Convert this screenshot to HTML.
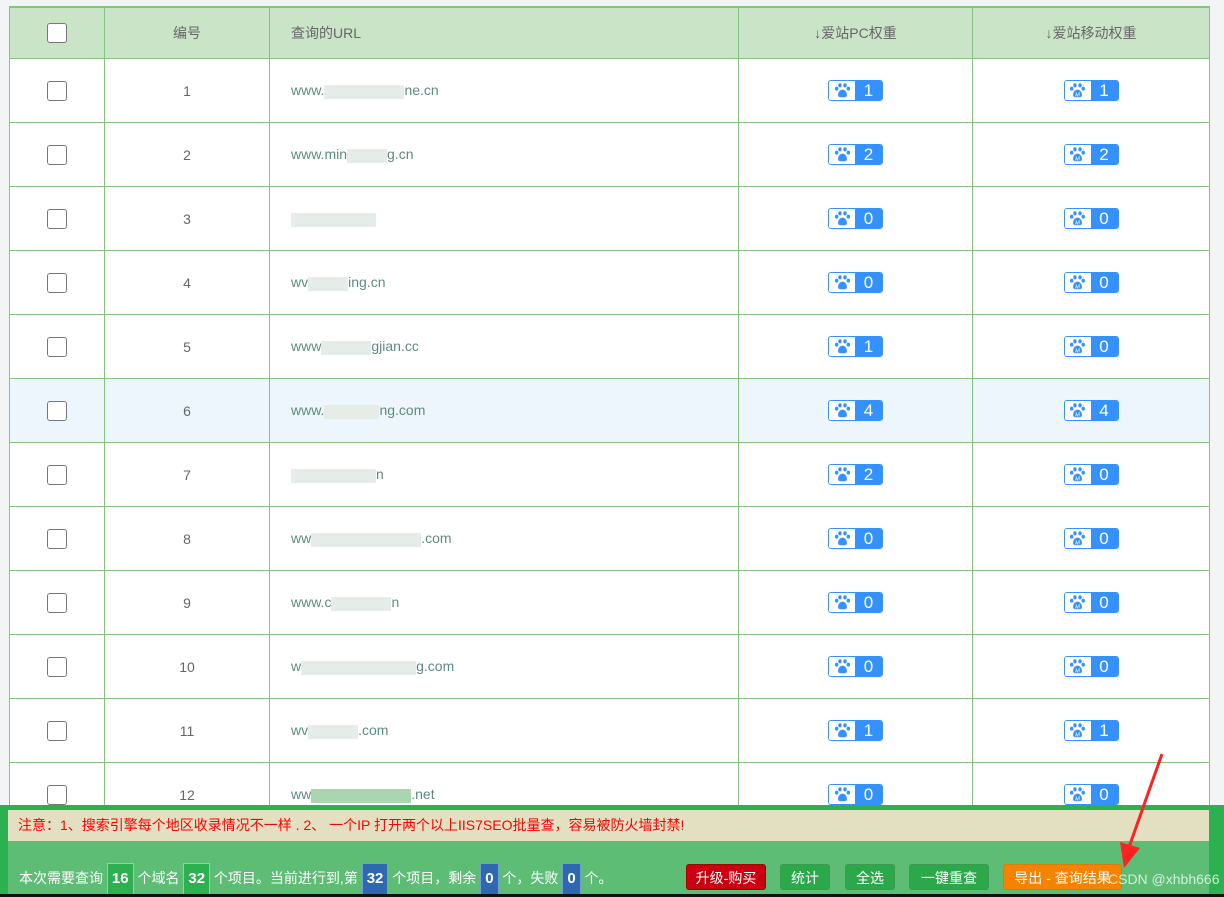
<!DOCTYPE html>
<html><head><meta charset="utf-8"><style>
body{margin:0;width:1224px;height:897px;background:#f3f4f6;font-family:"Liberation Sans","Noto Sans CJK SC",sans-serif;position:relative;overflow:hidden}
table{position:absolute;left:9px;top:6px;border-collapse:collapse;width:1200px;background:#fff;table-layout:fixed}
td,th{border:1px solid #86c37f;text-align:center;font-size:14px;color:#666;font-weight:normal;padding:0}
th{background:#c9e4c7;height:50px;border-top:2px solid #86c37f}
td{height:63px}
.u{text-align:left;padding-left:21px;color:#5e8b7c}
.cb{display:inline-block;width:18px;height:18px;border:1px solid #777;border-radius:3px;background:#fff;vertical-align:middle}
.b{display:inline-flex;height:21px;border:1px solid #3591fd;border-radius:3px;overflow:hidden;vertical-align:middle;box-sizing:border-box}
.b i{width:26px;background:#fff;display:flex;align-items:center;justify-content:center}
.b span{width:27px;background:#3591fd;color:#fff;font-size:17px;line-height:19px;text-align:center}
tr.h td{background:#edf6fc}
.m{display:inline-block;background:#e6ece8;height:14px;vertical-align:middle}
#p{position:absolute;left:0;top:805px;width:1224px;height:89px;background:#2db050}
#n{position:absolute;left:8px;top:5px;width:1201px;height:31px;background:#e3dfc1;color:#f00;font-size:14px;line-height:31px;padding-left:10px;box-sizing:border-box}
#g{position:absolute;left:8px;top:36px;width:1201px;height:53px;background:#5dbd75;color:#fff;font-size:14px}
#s{position:absolute;left:11px;top:22px;line-height:30px;white-space:nowrap}
.k{display:inline-block;padding:0 4px;height:30px;line-height:30px;font-weight:bold;font-size:15px;vertical-align:middle;border:1px solid #8fd59f}
.gr{background:#2db050}.bl{background:#2f67b1;border-color:#6f9fd1}
.btn{position:absolute;top:23px;height:26px;line-height:26px;text-align:center;color:#fff;border-radius:3px;font-size:14px;background:#2ba84a;border:1px solid #3b9a50;box-sizing:border-box}
#bot{position:absolute;left:0;top:894px;width:1224px;height:3px;background:#111}
</style></head><body>
<svg width="0" height="0" style="position:absolute"><defs><g id="paw" fill="#3591fd"><ellipse cx="2.8" cy="6" rx="1.8" ry="2.2"/><ellipse cx="6.3" cy="2.5" rx="1.8" ry="2.2"/><ellipse cx="11.7" cy="2.5" rx="1.8" ry="2.2"/><ellipse cx="15.2" cy="6" rx="1.8" ry="2.2"/><path d="M9 7C5.5 7 3.5 11.5 4.5 13.8 5.5 16 8 15 9 15 10 15 12.5 16 13.5 13.8 14.5 11.5 12.5 7 9 7Z"/></g></defs></svg>
<table>
<colgroup><col style="width:95px"><col style="width:165px"><col style="width:469px"><col style="width:234px"><col style="width:237px"></colgroup>
<tr><th><span class="cb"></span></th><th>编号</th><th class="u" style="color:#666">查询的URL</th><th>↓爱站PC权重</th><th>↓爱站移动权重</th></tr>
<tr><td><span class="cb"></span></td><td>1</td><td class="u">www.<span class="m" style="width:80px"></span>ne.cn</td><td><span class="b"><i><svg width="17" height="15" viewBox="0 0 18 16"><use href="#paw"/></svg></i><span>1</span></span></td><td><span class="b"><i><svg width="17" height="15" viewBox="0 0 18 16"><use href="#paw"/><text x="9" y="14.5" font-size="6" fill="#fff" text-anchor="middle" font-family="Liberation Sans">M</text></svg></i><span>1</span></span></td></tr>
<tr><td><span class="cb"></span></td><td>2</td><td class="u">www.min<span class="m" style="width:40px"></span>g.cn</td><td><span class="b"><i><svg width="17" height="15" viewBox="0 0 18 16"><use href="#paw"/></svg></i><span>2</span></span></td><td><span class="b"><i><svg width="17" height="15" viewBox="0 0 18 16"><use href="#paw"/><text x="9" y="14.5" font-size="6" fill="#fff" text-anchor="middle" font-family="Liberation Sans">M</text></svg></i><span>2</span></span></td></tr>
<tr><td><span class="cb"></span></td><td>3</td><td class="u"><span class="m" style="width:85px"></span></td><td><span class="b"><i><svg width="17" height="15" viewBox="0 0 18 16"><use href="#paw"/></svg></i><span>0</span></span></td><td><span class="b"><i><svg width="17" height="15" viewBox="0 0 18 16"><use href="#paw"/><text x="9" y="14.5" font-size="6" fill="#fff" text-anchor="middle" font-family="Liberation Sans">M</text></svg></i><span>0</span></span></td></tr>
<tr><td><span class="cb"></span></td><td>4</td><td class="u">wv<span class="m" style="width:40px"></span>ing.cn</td><td><span class="b"><i><svg width="17" height="15" viewBox="0 0 18 16"><use href="#paw"/></svg></i><span>0</span></span></td><td><span class="b"><i><svg width="17" height="15" viewBox="0 0 18 16"><use href="#paw"/><text x="9" y="14.5" font-size="6" fill="#fff" text-anchor="middle" font-family="Liberation Sans">M</text></svg></i><span>0</span></span></td></tr>
<tr><td><span class="cb"></span></td><td>5</td><td class="u">www<span class="m" style="width:50px"></span>gjian.cc</td><td><span class="b"><i><svg width="17" height="15" viewBox="0 0 18 16"><use href="#paw"/></svg></i><span>1</span></span></td><td><span class="b"><i><svg width="17" height="15" viewBox="0 0 18 16"><use href="#paw"/><text x="9" y="14.5" font-size="6" fill="#fff" text-anchor="middle" font-family="Liberation Sans">M</text></svg></i><span>0</span></span></td></tr>
<tr class="h"><td><span class="cb"></span></td><td>6</td><td class="u">www.<span class="m" style="width:55px"></span>ng.com</td><td><span class="b"><i><svg width="17" height="15" viewBox="0 0 18 16"><use href="#paw"/></svg></i><span>4</span></span></td><td><span class="b"><i><svg width="17" height="15" viewBox="0 0 18 16"><use href="#paw"/><text x="9" y="14.5" font-size="6" fill="#fff" text-anchor="middle" font-family="Liberation Sans">M</text></svg></i><span>4</span></span></td></tr>
<tr><td><span class="cb"></span></td><td>7</td><td class="u"><span class="m" style="width:85px"></span>n</td><td><span class="b"><i><svg width="17" height="15" viewBox="0 0 18 16"><use href="#paw"/></svg></i><span>2</span></span></td><td><span class="b"><i><svg width="17" height="15" viewBox="0 0 18 16"><use href="#paw"/><text x="9" y="14.5" font-size="6" fill="#fff" text-anchor="middle" font-family="Liberation Sans">M</text></svg></i><span>0</span></span></td></tr>
<tr><td><span class="cb"></span></td><td>8</td><td class="u">ww<span class="m" style="width:110px"></span>.com</td><td><span class="b"><i><svg width="17" height="15" viewBox="0 0 18 16"><use href="#paw"/></svg></i><span>0</span></span></td><td><span class="b"><i><svg width="17" height="15" viewBox="0 0 18 16"><use href="#paw"/><text x="9" y="14.5" font-size="6" fill="#fff" text-anchor="middle" font-family="Liberation Sans">M</text></svg></i><span>0</span></span></td></tr>
<tr><td><span class="cb"></span></td><td>9</td><td class="u">www.c<span class="m" style="width:60px"></span>n</td><td><span class="b"><i><svg width="17" height="15" viewBox="0 0 18 16"><use href="#paw"/></svg></i><span>0</span></span></td><td><span class="b"><i><svg width="17" height="15" viewBox="0 0 18 16"><use href="#paw"/><text x="9" y="14.5" font-size="6" fill="#fff" text-anchor="middle" font-family="Liberation Sans">M</text></svg></i><span>0</span></span></td></tr>
<tr><td><span class="cb"></span></td><td>10</td><td class="u">w<span class="m" style="width:115px"></span>g.com</td><td><span class="b"><i><svg width="17" height="15" viewBox="0 0 18 16"><use href="#paw"/></svg></i><span>0</span></span></td><td><span class="b"><i><svg width="17" height="15" viewBox="0 0 18 16"><use href="#paw"/><text x="9" y="14.5" font-size="6" fill="#fff" text-anchor="middle" font-family="Liberation Sans">M</text></svg></i><span>0</span></span></td></tr>
<tr><td><span class="cb"></span></td><td>11</td><td class="u">wv<span class="m" style="width:50px"></span>.com</td><td><span class="b"><i><svg width="17" height="15" viewBox="0 0 18 16"><use href="#paw"/></svg></i><span>1</span></span></td><td><span class="b"><i><svg width="17" height="15" viewBox="0 0 18 16"><use href="#paw"/><text x="9" y="14.5" font-size="6" fill="#fff" text-anchor="middle" font-family="Liberation Sans">M</text></svg></i><span>1</span></span></td></tr>
<tr><td><span class="cb"></span></td><td>12</td><td class="u">ww<span class="m" style="width:100px;background:#a9d6ae"></span>.net</td><td><span class="b"><i><svg width="17" height="15" viewBox="0 0 18 16"><use href="#paw"/></svg></i><span>0</span></span></td><td><span class="b"><i><svg width="17" height="15" viewBox="0 0 18 16"><use href="#paw"/><text x="9" y="14.5" font-size="6" fill="#fff" text-anchor="middle" font-family="Liberation Sans">M</text></svg></i><span>0</span></span></td></tr>
</table>
<div id="p">
<div id="n">注意：1、搜索引擎每个地区收录情况不一样 . 2、 一个IP 打开两个以上IIS7SEO批量查，容易被防火墙封禁!</div>
<div id="g">
<div id="s">本次需要查询 <span class="k gr">16</span> 个域名 <span class="k gr">32</span> 个项目。当前进行到,第 <span class="k bl">32</span> 个项目，剩余 <span class="k bl">0</span> 个，失败 <span class="k bl">0</span> 个。</div>
<div class="btn" style="left:678px;width:80px;background:#c8000f;border-color:#a00">升级-购买</div>
<div class="btn" style="left:772px;width:50px">统计</div>
<div class="btn" style="left:837px;width:50px">全选</div>
<div class="btn" style="left:901px;width:80px">一键重查</div>
<div class="btn" style="left:995px;width:119px;background:#f38300;border-color:#e07a00">导出 - 查询结果</div>
<div style="position:absolute;left:1100px;top:30px;color:rgba(255,255,255,.75);font-size:14px;white-space:nowrap">CSDN @xhbh666</div>
</div>
</div>
<svg style="position:absolute;left:1110px;top:750px" width="60" height="125"><path d="M52 4 L18 100" stroke="#f22" stroke-width="3"/><path d="M10 92 L14 118 L30 98 Z" fill="#f22"/></svg>
<div id="bot"></div>
</body></html>
